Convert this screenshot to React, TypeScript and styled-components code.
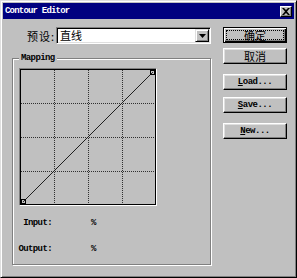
import React from "react";
import styled, { createGlobalStyle } from "styled-components";

const latin = `"Liberation Mono", "Noto Sans CJK SC", monospace`;
const cjk = `"Noto Sans CJK SC", "Liberation Sans", sans-serif`;

const GlobalStyle = createGlobalStyle`
  html, body {
    margin: 0;
    padding: 0;
    background: #c0c0c0;
  }
  body {
    width: 297px;
    height: 278px;
    overflow: hidden;
  }
`;

const Window = styled.div`
  box-sizing: border-box;
  width: 297px;
  height: 278px;
  background: #c0c0c0;
  border: 1px solid;
  border-color: #dfdfdf #000 #000 #dfdfdf;
  box-shadow: inset 1px 1px #fff, inset -1px -1px #808080;
  padding: 2px;
  display: flex;
  flex-direction: column;
`;

const TitleBar = styled.div`
  height: 16px;
  background: #000080;
  display: flex;
  align-items: center;
  justify-content: space-between;
  padding: 0 2px 0 2px;
`;

const Title = styled.span`
  color: #fff;
  font-family: ${latin};
  font-weight: bold;
  font-size: 9px;
  letter-spacing: -0.8px;
`;

const CloseButton = styled.div`
  box-sizing: border-box;
  width: 12px;
  height: 11px;
  background: #c0c0c0;
  border: 1px solid;
  border-color: #fff #000 #000 #fff;
  box-shadow: inset -1px -1px #808080;
  display: flex;
  align-items: center;
  justify-content: center;
`;

const Content = styled.div`
  display: flex;
  padding: 8px 0 0 9px;
`;

const LeftColumn = styled.div`
  width: 199px;
  display: flex;
  flex-direction: column;
`;

const PresetRow = styled.div`
  display: flex;
  align-items: center;
  height: 17px;
`;

const PresetLabel = styled.span`
  width: 44px;
  padding-right: 1px;
  box-sizing: border-box;
  text-align: right;
  font-family: ${cjk};
  font-size: 11px;
  letter-spacing: 1px;
`;

const Combo = styled.div`
  box-sizing: border-box;
  width: 155px;
  height: 17px;
  background: #fff;
  border: 1px solid;
  border-color: #808080 #fff #fff #808080;
  box-shadow: inset 1px 1px #000, inset -1px -1px #dfdfdf;
  display: flex;
  align-items: center;
  justify-content: space-between;
  padding: 0 1px 0 3px;
`;

const ComboText = styled.span`
  font-family: ${cjk};
  font-size: 11px;
  line-height: 13px;
`;

const DropButton = styled.div`
  box-sizing: border-box;
  width: 14px;
  height: 13px;
  background: #c0c0c0;
  border: 1px solid;
  border-color: #dfdfdf #000 #000 #dfdfdf;
  box-shadow: inset 1px 1px #fff, inset -1px -1px #808080;
  display: flex;
  align-items: center;
  justify-content: center;
`;

const Group = styled.fieldset`
  box-sizing: border-box;
  margin: 9px 0 0 0;
  padding: 0;
  min-width: 0;
  height: 212px;
  border: 1px solid #808080;
  box-shadow: 1px 1px 0 #fff, inset 1px 1px 0 #fff;
`;

const Legend = styled.legend`
  margin-left: 6px;
  padding: 0 2px;
  font-family: ${latin};
  font-weight: bold;
  font-size: 9px;
  line-height: 10px;
  letter-spacing: -0.6px;
  background: #c0c0c0;
`;

const Graph = styled.div`
  box-sizing: border-box;
  width: 138px;
  height: 138px;
  margin: 5px 0 0 6px;
  border: 1px solid;
  border-color: #808080 #fff #fff #808080;
  box-shadow: inset 1px 1px #000, inset -1px -1px #000;
  svg {
    display: block;
  }
`;

const Readout = styled.div<{ $gap: number }>`
  display: flex;
  align-items: center;
  height: 12px;
  margin-top: ${(p) => p.$gap}px;
  font-family: ${latin};
  font-weight: bold;
  font-size: 9px;
  letter-spacing: -0.6px;
`;

const ReadoutLabel = styled.span`
  width: 39px;
  text-align: right;
`;

const ReadoutValue = styled.span`
  margin-left: 39px;
`;

const RightColumn = styled.div`
  margin-left: 12px;
  width: 64px;
  display: flex;
  flex-direction: column;
`;

const Button = styled.div<{ $gap: number; $default?: boolean }>`
  box-sizing: border-box;
  width: 64px;
  height: 16px;
  margin-top: ${(p) => p.$gap}px;
  background: #c0c0c0;
  border: 1px solid;
  border-color: ${(p) => (p.$default ? "#000" : "#fff #000 #000 #fff")};
  box-shadow: ${(p) =>
    p.$default
      ? "inset 1px 1px #fff, inset -1px -1px #000, inset -2px -2px #808080"
      : "inset -1px -1px #808080, inset 1px 1px #dfdfdf"};
  display: flex;
  align-items: center;
  justify-content: center;
  padding: 2px;
`;

const ButtonLabel = styled.span<{ $focus?: boolean; $cjk?: boolean }>`
  box-sizing: border-box;
  height: 100%;
  display: flex;
  align-items: center;
  justify-content: center;
  width: ${(p) => (p.$focus ? "100%" : "auto")};
  border: 1px dotted ${(p) => (p.$focus ? "#000" : "transparent")};
  font-family: ${(p) => (p.$cjk ? cjk : latin)};
  font-weight: ${(p) => (p.$cjk ? "normal" : "bold")};
  font-size: ${(p) => (p.$cjk ? "11px" : "9px")};
  letter-spacing: ${(p) => (p.$cjk ? "0" : "-0.5px")};
  u {
    text-decoration: underline;
  }
`;

const CurveGraph = () => (
  <svg width={136} height={136} viewBox="0 0 136 136">
    {[34, 68, 102].map((v) => (
      <g key={v} stroke="#303030" strokeWidth={1} strokeDasharray="1 1">
        <line x1={v + 0.5} y1={1} x2={v + 0.5} y2={135} />
        <line x1={1} y1={v + 0.5} x2={135} y2={v + 0.5} />
      </g>
    ))}
    <line x1={3} y1={133} x2={133} y2={3} stroke="#202020" strokeWidth={1} />
    <rect x={1.5} y={130.5} width={4} height={4} fill="none" stroke="#000" />
    <rect x={130.5} y={1.5} width={4} height={4} fill="none" stroke="#000" />
  </svg>
);

export default function App() {
  return (
    <>
      <GlobalStyle />
      <Window>
        <TitleBar>
          <Title>Contour Editor</Title>
          <CloseButton>
            <svg width={8} height={7} viewBox="0 0 8 7">
              <path
                d="M0 0h2l2 2 2-2h2L5 3.5 8 7H6L4 5 2 7H0l3-3.5z"
                fill="#000"
              />
            </svg>
          </CloseButton>
        </TitleBar>
        <Content>
          <LeftColumn>
            <PresetRow>
              <PresetLabel>预设:</PresetLabel>
              <Combo>
                <ComboText>直线</ComboText>
                <DropButton>
                  <svg width={7} height={4} viewBox="0 0 7 4">
                    <path d="M0 0h7L3.5 4z" fill="#000" />
                  </svg>
                </DropButton>
              </Combo>
            </PresetRow>
            <Group>
              <Legend>Mapping</Legend>
              <Graph>
                <CurveGraph />
              </Graph>
              <Readout $gap={11}>
                <ReadoutLabel>Input:</ReadoutLabel>
                <ReadoutValue>%</ReadoutValue>
              </Readout>
              <Readout $gap={14}>
                <ReadoutLabel>Output:</ReadoutLabel>
                <ReadoutValue>%</ReadoutValue>
              </Readout>
            </Group>
          </LeftColumn>
          <RightColumn>
            <Button $gap={0} $default>
              <ButtonLabel $focus $cjk>
                确定
              </ButtonLabel>
            </Button>
            <Button $gap={5}>
              <ButtonLabel $cjk>取消</ButtonLabel>
            </Button>
            <Button $gap={10}>
              <ButtonLabel>
                <u>L</u>oad...
              </ButtonLabel>
            </Button>
            <Button $gap={7}>
              <ButtonLabel>
                <u>S</u>ave...
              </ButtonLabel>
            </Button>
            <Button $gap={10}>
              <ButtonLabel>
                <u>N</u>ew...
              </ButtonLabel>
            </Button>
          </RightColumn>
        </Content>
      </Window>
    </>
  );
}
